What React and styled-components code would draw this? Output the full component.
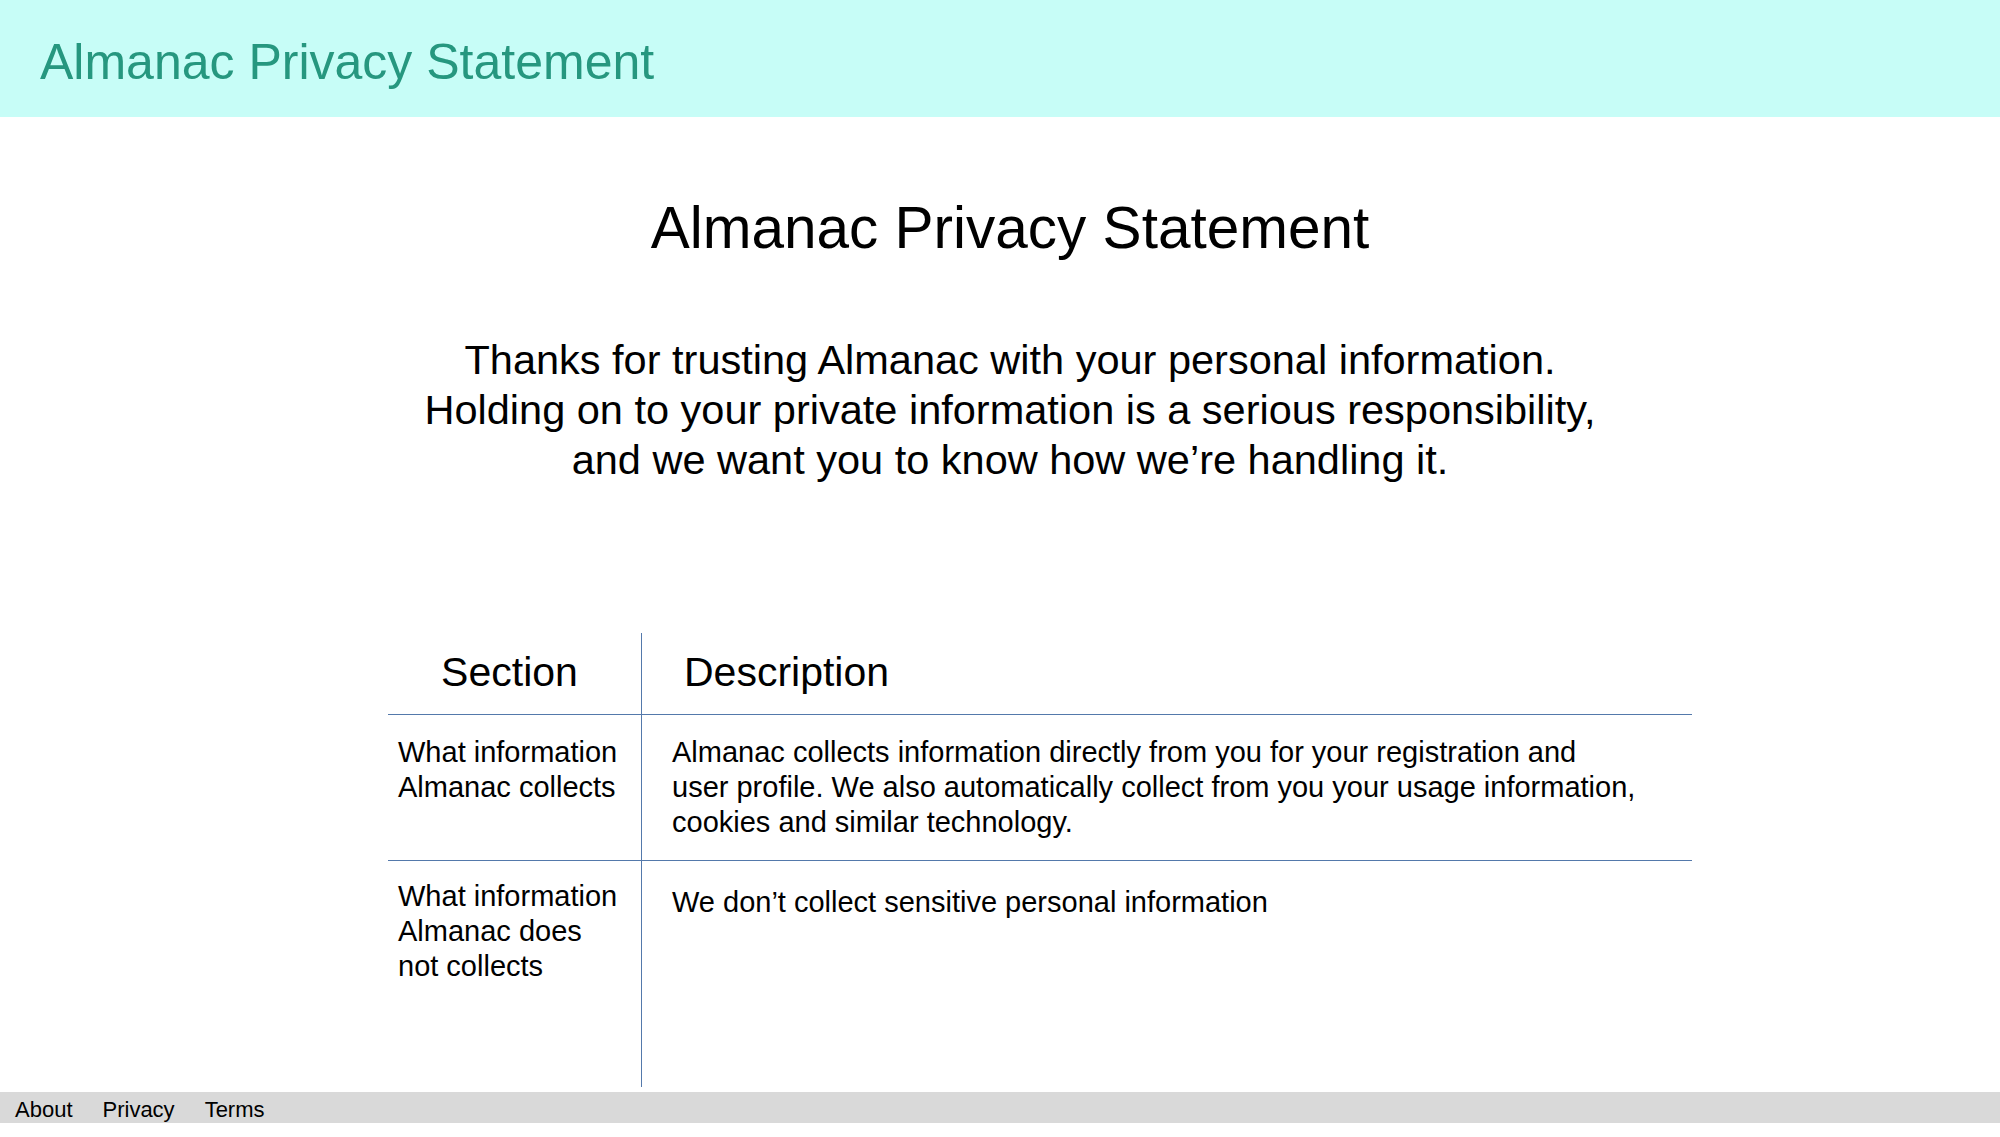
import React from "react";
import styled, { createGlobalStyle } from "styled-components";

const Global = createGlobalStyle`
  html, body {
    margin: 0;
    padding: 0;
    background: #ffffff;
    font-family: "Liberation Sans", Arial, sans-serif;
    color: #000000;
  }
  * { box-sizing: border-box; }
`;

const Page = styled.div`
  width: 2000px;
  height: 1137px;
  display: flex;
  flex-direction: column;
  overflow: hidden;
`;

const TopBar = styled.header`
  height: 117px;
  background: #c7fdf7;
  display: flex;
  align-items: center;
  padding: 8px 0 0 40px;
`;

const Brand = styled.h1`
  margin: 0;
  font-size: 50px;
  font-weight: 400;
  color: #26977f;
  line-height: 1.15;
`;

const Title = styled.h2`
  margin: 76px 0 0;
  padding-left: 20px;
  text-align: center;
  font-size: 58.5px;
  font-weight: 400;
  line-height: 70px;
`;

const Intro = styled.p`
  margin: 72px 0 0;
  padding-left: 20px;
  text-align: center;
  font-size: 41.5px;
  line-height: 50px;
`;

const Table = styled.div`
  margin: 148px 0 0 388px;
  width: 1304px;
`;

const Row = styled.div`
  display: grid;
  grid-template-columns: 254px 1fr;
  border-bottom: ${(p) => (p.$last ? "none" : "1px solid #5479ab")};
  height: ${(p) => p.$height}px;
`;

const HeadCell = styled.div`
  font-size: 41px;
  line-height: 78px;
  padding: ${(p) => (p.$first ? "0 10px 0 0" : "0 0 0 42px")};
  text-align: ${(p) => (p.$first ? "center" : "left")};
  border-right: ${(p) => (p.$first ? "1px solid #5479ab" : "none")};
`;

const Cell = styled.div`
  font-size: 29px;
  line-height: 35px;
  padding: ${(p) => p.$top}px ${(p) => (p.$first ? "20px" : "54px")} 0
    ${(p) => (p.$first ? "10px" : "30px")};
  border-right: ${(p) => (p.$first ? "1px solid #5479ab" : "none")};
`;

const Footer = styled.footer`
  margin-top: 5px;
  height: 31px;
  background: #d9d9d9;
  display: flex;
  align-items: center;
  padding-top: 4px;
`;

const FooterLink = styled.a`
  font-size: 22px;
  color: #000000;
  text-decoration: none;
  padding: 0 15px;
  cursor: pointer;
`;

const rows = [
  {
    section: "What information Almanac collects",
    description:
      "Almanac collects information directly from you for your registration and user profile. We also automatically collect from you your usage information, cookies and similar technology.",
    top: [20, 20],
    height: 146,
  },
  {
    section: "What information Almanac does not collects",
    description: "We don\u2019t collect sensitive personal information",
    top: [18, 24],
    height: 226,
    last: true,
  },
];

export default function App() {
  return (
    <Page>
      <Global />
      <TopBar>
        <Brand>Almanac Privacy Statement</Brand>
      </TopBar>

      <Title>Almanac Privacy Statement</Title>
      <Intro>
        Thanks for trusting Almanac with your personal information.
        <br />
        Holding on to your private information is a serious responsibility,
        <br />
        and we want you to know how we{"\u2019"}re handling it.
      </Intro>

      <Table>
        <Row $height={82}>
          <HeadCell $first>Section</HeadCell>
          <HeadCell>Description</HeadCell>
        </Row>
        {rows.map((r, i) => (
          <Row key={i} $height={r.height} $last={r.last}>
            <Cell $first $top={r.top[0]}>{r.section}</Cell>
            <Cell $top={r.top[1]}>{r.description}</Cell>
          </Row>
        ))}
      </Table>

      <Footer>
        <FooterLink>About</FooterLink>
        <FooterLink>Privacy</FooterLink>
        <FooterLink>Terms</FooterLink>
      </Footer>
    </Page>
  );
}
